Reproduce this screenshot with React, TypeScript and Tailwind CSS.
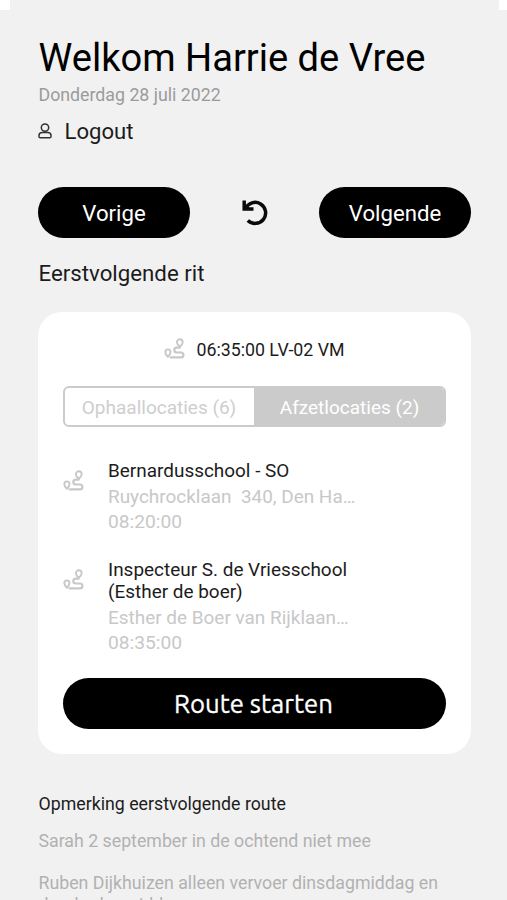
import type { ReactNode } from "react";

function RouteIcon() {
  return (
    <svg width="21" height="22" viewBox="0 0 21 22" fill="none" stroke="#c8c8c8" strokeWidth="1.900" strokeLinejoin="round" strokeLinecap="round" className="shrink-0">
      <path d="M3.900 18.800C2.400 17.200 1.300 15.700 1.300 14a2.600 2.600 0 0 1 5.200 0c0 1.700-1.100 3.200-2.600 4.800Z" />
      <path d="M15.800 8.700C14.300 7.300 12.900 5.900 12.900 4.200a2.900 2.900 0 0 1 5.800 0c0 1.700-1.400 3.100-2.900 4.500Z" />
      <path d="M6.500 19.300H17a2.400 2.400 0 0 0 0-4.800h-4.300a2.400 2.400 0 0 1 0-4.800h3" strokeWidth="2.200" />
    </svg>
  );
}

function UserIcon() {
  return (
    <svg width="14" height="16" viewBox="0 0 14 16" fill="none" stroke="#333" strokeWidth="1.500" strokeLinejoin="round" className="-mt-px">
      <circle cx="7" cy="4.600" r="3.700" />
      <path d="M4.300 9.600h5.400c2 0 3.300 1.200 3.300 2.900v1c0 .8-.5 1.300-1.300 1.300H2.300c-.8 0-1.300-.5-1.300-1.300v-1c0-1.700 1.300-2.900 3.300-2.900Z" />
    </svg>
  );
}

function UndoIcon() {
  return (
    <svg width="26" height="26" viewBox="0 0 26 26" fill="none" stroke="#0a0a0a" strokeWidth="3.500">
      <path d="M2.200.5v8.600h9.300" />
      <path d="M3.600 8.500A10.500 10.500 0 1 1 5.800 20.400" />
      <path d="M3 3.500v6h6Z" fill="#0a0a0a" stroke="none" />
    </svg>
  );
}

function Pill({ children }: { children: ReactNode }) {
  return (
    <button className="h-[51px] w-[152px] rounded-full bg-black pt-px text-[22.200px] leading-[26px] text-white">
      {children}
    </button>
  );
}

function Stop({ name, address, time }: { name: ReactNode; address: string; time: string }) {
  return (
    <div className="flex">
      <div className="w-[45px] pt-[10px]">
        <RouteIcon />
      </div>
      <div className="whitespace-pre text-[18.950px] leading-[25px] text-[#c8c8c8]">
        <div className="mb-[2px] leading-[22px] text-[#1c1c1c]">{name}</div>
        <div>{address}</div>
        <div className="text-[19.200px]">{time}</div>
      </div>
    </div>
  );
}

export default function App() {
  return (
    <div className="relative h-[900px] w-[507px] overflow-hidden bg-[#f1f1f1] pl-[38px] pr-[36px] pt-[35px] font-['Roboto',sans-serif] text-[#1c1c1c]">
      <div className="absolute left-0 top-0 h-[10px] w-[10px] bg-white" />
      <div className="absolute right-0 top-0 h-[10px] w-[8px] bg-white" />

      <h1 className="h-[46px] whitespace-nowrap pl-[0.500px] text-[38.100px] leading-[46px] text-black">Welkom Harrie de Vree</h1>
      <p className="mt-[2px] h-6 pl-[0.500px] text-[17.750px] leading-6 text-[#9b9b9b]">Donderdag 28 juli 2022</p>
      <div className="mt-[9px] flex h-[30px] items-center text-[22.100px] leading-[30px]">
        <UserIcon />
        <span className="ml-[12.500px]">Logout</span>
      </div>

      <div className="mt-[41px] flex items-center justify-between">
        <Pill>Vorige</Pill>
        <UndoIcon />
        <Pill>Volgende</Pill>
      </div>

      <h2 className="mt-[20px] h-[30px] pl-[0.500px] text-[22.250px] leading-[30px]">Eerstvolgende rit</h2>

      <section className="mt-[24px] h-[442px] rounded-[24px] bg-white px-[25px] pt-[24px]">
        <div className="flex h-7 items-center justify-center text-[17.800px]">
          <span className="-mt-[3px]">
            <RouteIcon />
          </span>
          <span className="ml-[11px]">06:35:00 LV-02 VM</span>
        </div>
        <div className="mt-[22px] flex h-[41px] overflow-hidden rounded-[6px] border-2 border-[#cbcbcb] text-center text-[19px] leading-[39px]">
          <div className="w-[189px] pr-px text-[#cecece]">Ophaallocaties (6)</div>
          <div className="flex-1 bg-[#cbcbcb] pl-px text-white">Afzetlocaties (2)</div>
        </div>
        <div className="mt-[33px] flex flex-col gap-[25px]">
          <Stop name="Bernardusschool - SO" address="Ruychrocklaan  340, Den Ha…" time="08:20:00" />
          <Stop name={"Inspecteur S. de Vriesschool\n(Esther de boer)"} address="Esther de Boer van Rijklaan…" time="08:35:00" />
        </div>
        <button className="mt-[23px] h-[51px] w-full rounded-full bg-black pr-[2px] font-['Ubuntu','Noto_Sans',sans-serif] text-[25.700px] leading-[30px] text-white [-webkit-text-stroke:0.300px_white]">
          Route starten
        </button>
      </section>

      <section className="mt-[38px] pl-[0.500px] text-[17.750px] text-[#b1b1b1]">
        <h3 className="leading-6 text-[#1c1c1c]">Opmerking eerstvolgende route</h3>
        <p className="mt-[13px] leading-6">Sarah 2 september in de ochtend niet mee</p>
        <p className="mt-[19px] leading-[22px]">
          Ruben Dijkhuizen alleen vervoer dinsdagmiddag en
          <br />
          donderdagmiddag
        </p>
      </section>
    </div>
  );
}
